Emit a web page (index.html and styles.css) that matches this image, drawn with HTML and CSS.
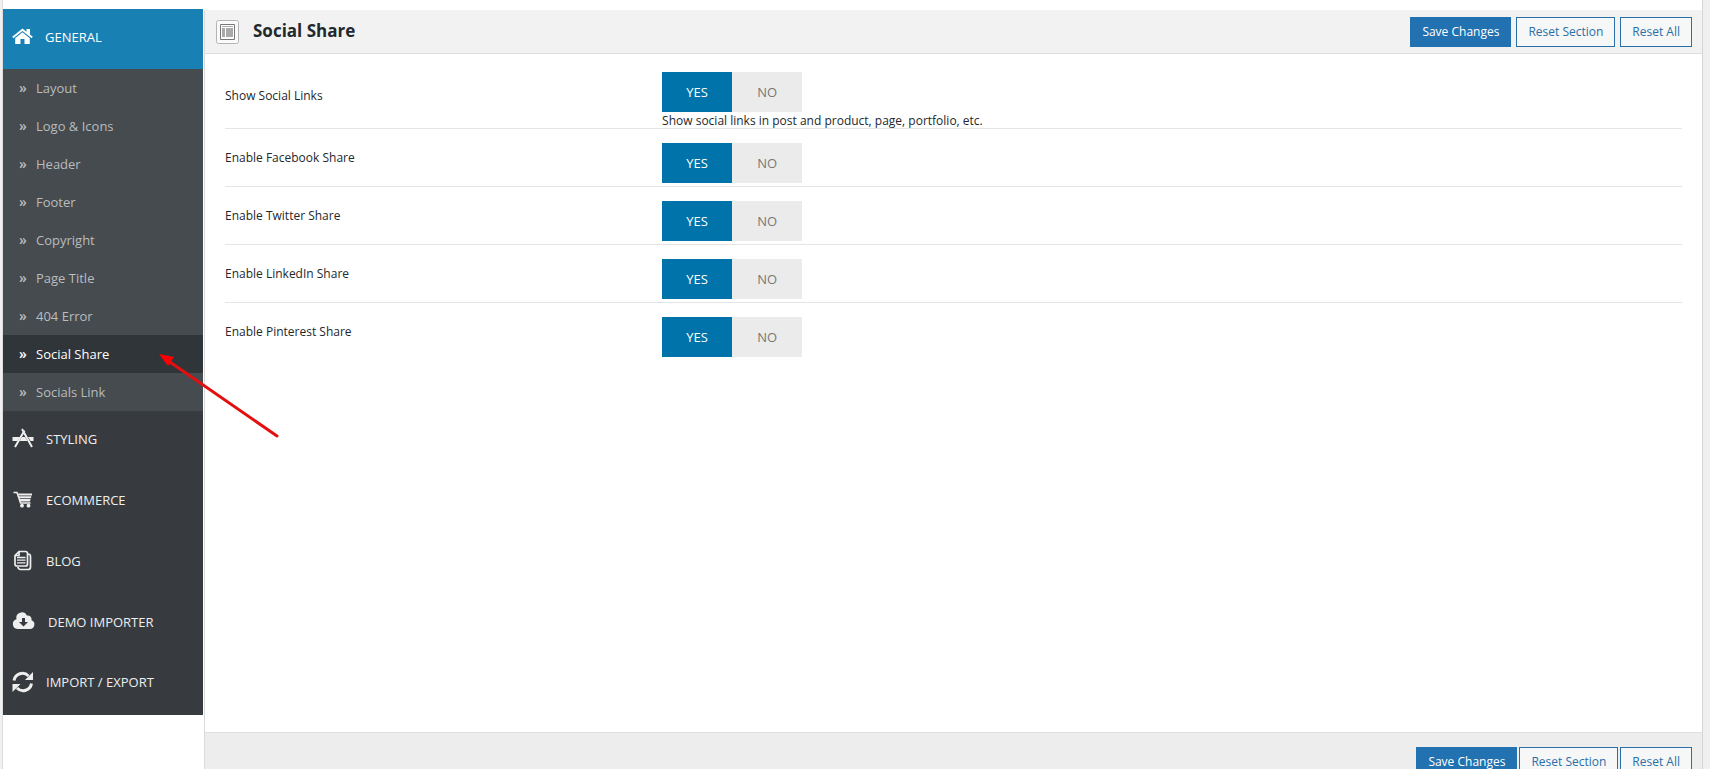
FILE: index.html
```html
<!doctype html>
<html lang="en">
  <head>
    <meta charset="utf-8" />
    <title>Theme Options</title>
    <link rel="stylesheet" href="styles.css">
  </head>
  <body>
    <div class="panel">
      <nav class="sidebar">
        <a class="group active" href="#general">
          <svg class="icon" viewBox="0 0 22 22"><path d="M10.500 2.500 14.500 5.700V3h3.500v5.500l2.800 2.300-1.200 1.400-9.100-7.300-9.100 7.300L.2 10.800z"/><path d="M10.500 6.300 17.800 12.200V18H12.500V13H8.500V18H3.200V12.200z"/></svg>
          <span>GENERAL</span>
        </a>
        <ul class="submenu">
          <li><a href="#layout"><i>»</i>Layout</a></li>
          <li><a href="#logo"><i>»</i>Logo &amp; Icons</a></li>
          <li><a href="#header"><i>»</i>Header</a></li>
          <li><a href="#footer"><i>»</i>Footer</a></li>
          <li><a href="#copyright"><i>»</i>Copyright</a></li>
          <li><a href="#page-title"><i>»</i>Page Title</a></li>
          <li><a href="#error"><i>»</i>404 Error</a></li>
          <li class="current">
            <a href="#social-share"><i>»</i>Social Share</a>
            <svg class="arrow" viewBox="0 0 122 88"><path d="M8 6 118 82" stroke="#e3100f" stroke-width="3" stroke-linecap="round"/><path d="M0 0 15 3 9 12z" fill="#f00"/></svg>
          </li>
          <li><a href="#socials-link"><i>»</i>Socials Link</a></li>
        </ul>
        <a class="group" href="#styling">
          <svg class="icon" viewBox="0 0 22 22"><path d="M.5 9h7.500l-2.500 4H.5zM10 9h3l2.500 4H7.500zM16 9h5.500v4h-3z"/><path d="M12.500 2.500 3 19M10 1l10 18" fill="none" stroke="currentColor" stroke-width="2"/></svg>
          <span>STYLING</span>
        </a>
        <a class="group" href="#ecommerce">
          <svg class="icon" viewBox="0 0 22 22"><path d="M1.500 3.500h3.500L8.500 14h10" fill="none" stroke="currentColor" stroke-width="1.500"/><path d="M6 4.500h14v2H6.500zM6.800 7.200h12.600l-.5 2H7.400zM7.700 10h10.800l-.5 2.500H8.300z"/><circle cx="10" cy="16.700" r="1.900"/><circle cx="16.500" cy="16.700" r="1.900"/></svg>
          <span>ECOMMERCE</span>
        </a>
        <a class="group" href="#blog">
          <svg class="icon" viewBox="0 0 22 22"><path d="M7 1.500h6.500a2 2 0 0 1 2 2V14a2 2 0 0 1-2 2H5a2 2 0 0 1-2-2V5.500zM16 4a2.500 2.500 0 0 1 2.500 2.500V17a2.500 2.500 0 0 1-2.500 2.500H8.500A2.500 2.500 0 0 1 6 17M7 1.500V5.500H3" fill="none" stroke="currentColor" stroke-width="1.700"/><path d="M5 7.500h8.500M5 10.200h8.500M5 12.900h8.500" stroke="currentColor" stroke-width="1.300"/></svg>
          <span>BLOG</span>
        </a>
        <a class="group" href="#demo-importer">
          <svg class="icon wide" viewBox="0 0 24 22"><path fill-rule="evenodd" d="M5.500 18A5 5 0 0 1 4.500 8.200 5.500 5.500 0 0 1 14.800 4.500 4 4 0 0 1 19.500 9.300 4.500 4.500 0 0 1 18 18zM10 7v4H7l4.500 4.500L16 11h-3V7z"/></svg>
          <span>DEMO IMPORTER</span>
        </a>
        <a class="group" href="#import-export">
          <svg class="icon" viewBox="0 0 22 22"><path d="M2 9.500A8.500 8.500 0 0 1 16.500 5M19.500 12.500A8.500 8.500 0 0 1 5 17" fill="none" stroke="currentColor" stroke-width="3"/><path d="M21 1v8h-8zM.5 21v-8h8z"/></svg>
          <span>IMPORT / EXPORT</span>
        </a>
      </nav>

      <main class="main">
        <header class="bar">
          <svg class="expand" viewBox="0 0 23 24"><rect x=".5" y=".5" width="22" height="23" rx="2" fill="#fbfbfb" stroke="#b4b4b4"/><path d="M4.500 4.500h14v15h-14z" fill="#fff" stroke="#777"/><path d="M6 6h11v1H6zM6 8h3v9H6zM10 8h7v9h-7z" fill="#aaa"/></svg>
          <h1>Social Share</h1>
          <div class="actions">
            <button class="primary">Save Changes</button>
            <button>Reset Section</button>
            <button>Reset All</button>
          </div>
        </header>

        <form class="fields">
          <fieldset class="field first">
            <div class="title" id="social-title">Show Social Links</div>
            <div class="control" role="radiogroup" aria-labelledby="social-title">
              <div class="switch">
                <label><input type="radio" name="social" checked><span>YES</span></label>
                <label><input type="radio" name="social"><span>NO</span></label>
              </div>
              <p class="description">Show social links in post and product, page, portfolio, etc.</p>
            </div>
          </fieldset>
          <fieldset class="field">
            <div class="title" id="facebook-title">Enable Facebook Share</div>
            <div class="control" role="radiogroup" aria-labelledby="facebook-title">
              <div class="switch">
                <label><input type="radio" name="facebook" checked><span>YES</span></label>
                <label><input type="radio" name="facebook"><span>NO</span></label>
              </div>
            </div>
          </fieldset>
          <fieldset class="field">
            <div class="title" id="twitter-title">Enable Twitter Share</div>
            <div class="control" role="radiogroup" aria-labelledby="twitter-title">
              <div class="switch">
                <label><input type="radio" name="twitter" checked><span>YES</span></label>
                <label><input type="radio" name="twitter"><span>NO</span></label>
              </div>
            </div>
          </fieldset>
          <fieldset class="field">
            <div class="title" id="linkedin-title">Enable LinkedIn Share</div>
            <div class="control" role="radiogroup" aria-labelledby="linkedin-title">
              <div class="switch">
                <label><input type="radio" name="linkedin" checked><span>YES</span></label>
                <label><input type="radio" name="linkedin"><span>NO</span></label>
              </div>
            </div>
          </fieldset>
          <fieldset class="field">
            <div class="title" id="pinterest-title">Enable Pinterest Share</div>
            <div class="control" role="radiogroup" aria-labelledby="pinterest-title">
              <div class="switch">
                <label><input type="radio" name="pinterest" checked><span>YES</span></label>
                <label><input type="radio" name="pinterest"><span>NO</span></label>
              </div>
            </div>
          </fieldset>
        </form>

        <footer class="bar bottom">
          <div class="actions">
            <button class="primary">Save Changes</button>
            <button>Reset Section</button>
            <button>Reset All</button>
          </div>
        </footer>
      </main>
    </div>
  </body>
</html>
```
FILE: styles.css
```css
* { box-sizing: border-box; margin: 0; padding: 0; }
html { overflow: hidden; }
body {
  height: 100vh;
  overflow: hidden;
  padding: 0 7px 0 2px;
  background: #f0f0f1;
  color: #23282d;
  font: 12px/16px "Open Sans", "Noto Sans", sans-serif;
}
a { color: inherit; text-decoration: none; }
i { font-style: normal; }

.panel {
  display: flex;
  padding-top: 9px;
  background: #fff;
  border-left: 1px solid #dcdcde;
  border-right: 1px solid #d5d5d8;
}

/* menu */
.sidebar { flex: none; width: 200px; font-size: 13px; font-weight: 500; }
.group {
  display: flex;
  align-items: center;
  gap: 12px;
  height: 61px;
  padding: 0 9px 6px;
  background: #373b3f;
  color: #eee;
}
.group.active {
  height: 60px;
  gap: 11px;
  padding-bottom: 4px;
  background: #1880b2;
  color: #fff;
}
.group:last-child { height: 60px; }
.icon { flex: none; width: 22px; height: 22px; fill: currentColor; }
.icon.wide { width: 24px; }
.submenu { list-style: none; background: #464b4f; color: #b9bcbe; }
.submenu li { position: relative; }
.submenu a { display: flex; height: 38px; align-items: center; padding-left: 16px; }
.submenu i { width: 17px; font-size: 14px; font-weight: 600; }
.submenu .current { background: #30353a; color: #fff; }
.arrow {
  position: absolute;
  z-index: 1;
  top: 19px;
  left: 156px;
  width: 122px;
  height: 88px;
  fill: none;
}

/* content */
.main { flex: 1; margin: 1px 0 0 1px; border-left: 1px solid #dadada; }
.bar {
  display: flex;
  align-items: center;
  height: 44px;
  padding: 0 10px 0 11px;
  background: #f2f2f2;
  border-bottom: 1px solid #dedede;
}
.bar.bottom {
  height: 58px;
  background: #ededed;
  border-top: 1px solid #e0e0e0;
  border-bottom: 0;
}
.expand { width: 23px; height: 24px; margin-right: 14px; }
h1 { padding-bottom: 2px; font-size: 17px; line-height: 24px; }
.actions { display: flex; gap: 5px; margin-left: auto; }
.bottom .actions { gap: 2px; }
button {
  height: 30px;
  padding: 0 11px;
  background: #f6f7f7;
  border: 1px solid #2a6fa8;
  color: #2a6fa8;
  font: inherit;
}
button.primary { background: #2271b1; border-color: #2271b1; color: #fff; }

.fields { min-height: 678px; padding: 4px 20px 0; }
.field {
  display: flex;
  padding: 14px 0 3px;
  border: 0;
  border-bottom: 1px solid #e5e5e5;
}
.field.first { padding-bottom: 0; }
.field:last-child { border-bottom: 0; }
.title { width: 30%; padding-top: 7px; }
.first .title { padding-top: 16px; }
.switch { display: flex; }
.switch input { position: absolute; opacity: 0; }
.switch span {
  display: block;
  width: 70px;
  background: #ebebeb;
  color: #777;
  font-size: 13px;
  line-height: 40px;
  text-align: center;
}
.switch input:checked + span { background: #0073aa; color: #fff; }
.description { height: 16px; line-height: 18px; }
```
